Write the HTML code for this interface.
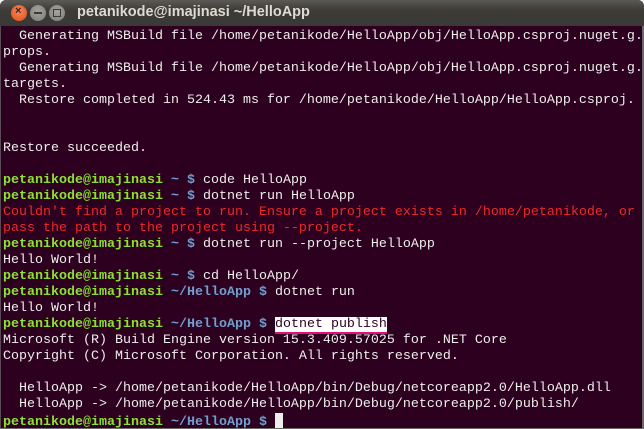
<!DOCTYPE html>
<html><head><style>
body{margin:0;width:644px;height:429px;overflow:hidden;background:#fff;}
.win{position:absolute;left:0;top:0;width:644px;height:429px;background:#2c001e;border-radius:6px 6px 0 0;overflow:hidden;}
.tb{position:absolute;left:0;top:0;width:644px;height:26px;background:linear-gradient(#5a5954,#3c3b37 40%,#3a3935);border-radius:6px 6px 0 0;}
.btn{position:absolute;top:5px;width:16px;height:16px;border-radius:50%;}
.title{position:absolute;left:77px;top:4px;font:bold 14.5px "Liberation Sans",sans-serif;color:#dfdbd2;}
pre{position:absolute;left:3px;top:29px;margin:0;font:13.33px/16px "Liberation Mono",monospace;color:#eeeeec;}
.g{color:#8ae234;font-weight:bold}.b{color:#729fcf;font-weight:bold}.r{color:#ef2929}
.hl{background:#fff;color:#2c001e;border-bottom:2px solid #e0107a;}
.cur{display:inline-block;width:8px;height:15px;background:#eeeeec;vertical-align:-3px}
.edge{position:absolute;right:0;top:26px;width:2px;height:403px;background:#6a6a66}
.edgel{position:absolute;left:0;top:26px;width:1px;height:403px;background:#5a4a55}
.edgeb{position:absolute;left:0;bottom:0;width:644px;height:1px;background:#6a6a66}
</style></head><body>
<div class="win">
<div class="tb"></div>
<div class="btn" style="left:11px;background:radial-gradient(circle at 50% 40%,#f58a5a,#df4a16);"><span style="position:absolute;left:4px;top:0;font:bold 11px 'Liberation Sans',sans-serif;color:#3c2018">×</span></div>
<div class="btn" style="left:30px;background:radial-gradient(circle at 50% 40%,#a5a49e,#7c7b76);"><span style="position:absolute;left:4px;top:7px;width:8px;height:2px;background:#3c3b37"></span></div>
<div class="btn" style="left:49px;background:radial-gradient(circle at 50% 40%,#a5a49e,#7c7b76);"><span style="position:absolute;left:4px;top:4px;width:6px;height:6px;border:1px solid #3c3b37"></span></div>
<div class="title">petanikode@imajinasi ~/HelloApp</div>
<div class="edgel"></div><div class="edge"></div><div class="edgeb"></div>
<pre>  Generating MSBuild file /home/petanikode/HelloApp/obj/HelloApp.csproj.nuget.g.
props.
  Generating MSBuild file /home/petanikode/HelloApp/obj/HelloApp.csproj.nuget.g.
targets.
  Restore completed in 524.43 ms for /home/petanikode/HelloApp/HelloApp.csproj.


Restore succeeded.

<span class="g">petanikode@imajinasi</span> <span class="b">~ $</span> code HelloApp
<span class="g">petanikode@imajinasi</span> <span class="b">~ $</span> dotnet run HelloApp
<span class="r">Couldn't find a project to run. Ensure a project exists in /home/petanikode, or
pass the path to the project using --project.</span>
<span class="g">petanikode@imajinasi</span> <span class="b">~ $</span> dotnet run --project HelloApp
Hello World!
<span class="g">petanikode@imajinasi</span> <span class="b">~ $</span> cd HelloApp/
<span class="g">petanikode@imajinasi</span> <span class="b">~/HelloApp $</span> dotnet run
Hello World!
<span class="g">petanikode@imajinasi</span> <span class="b">~/HelloApp $</span> <span class="hl">dotnet publish</span>
Microsoft (R) Build Engine version 15.3.409.57025 for .NET Core
Copyright (C) Microsoft Corporation. All rights reserved.

  HelloApp -&gt; /home/petanikode/HelloApp/bin/Debug/netcoreapp2.0/HelloApp.dll
  HelloApp -&gt; /home/petanikode/HelloApp/bin/Debug/netcoreapp2.0/publish/
<span class="g">petanikode@imajinasi</span> <span class="b">~/HelloApp $</span> <span class="cur"></span></pre>
</div>
</body></html>
